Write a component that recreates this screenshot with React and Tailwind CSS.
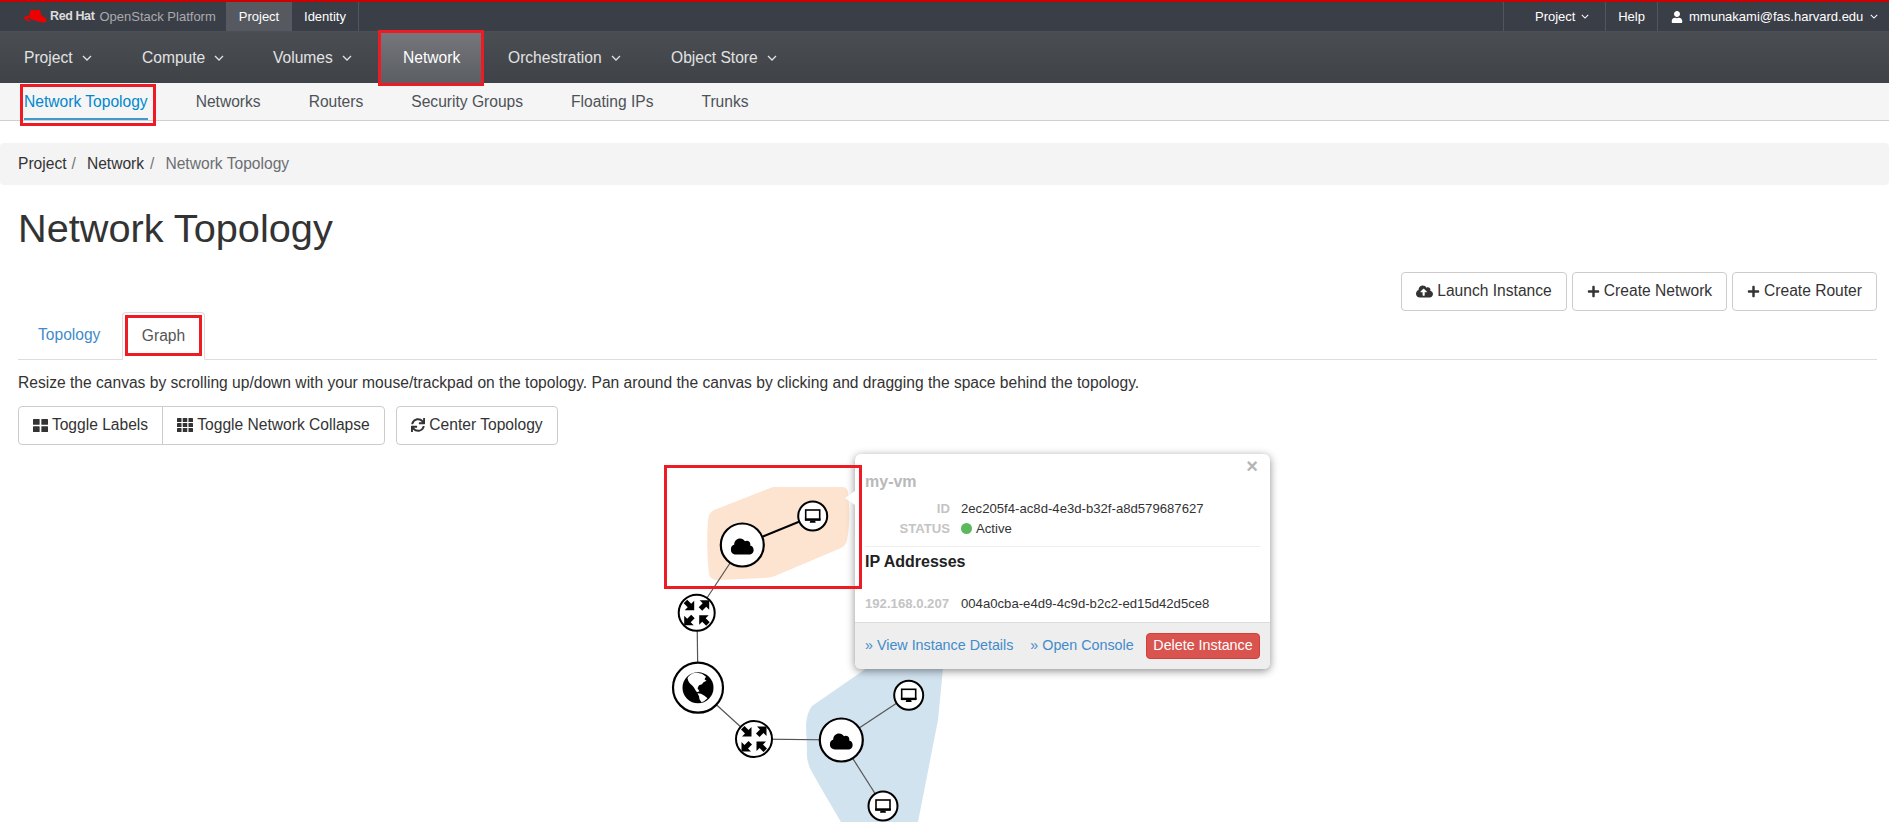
import React from "react";
import { FaCloud, FaPlus, FaCloudUploadAlt, FaSync, FaUser } from "react-icons/fa";

const Chevron = ({ className = "" }) => (
  <svg viewBox="0 0 10 6" className={className} fill="none" stroke="currentColor" strokeWidth="1.3">
    <path d="M1 1l4 4 4-4" />
  </svg>
);

const Grid = ({ n, className = "" }) => {
  const gap = n === 2 ? 1.5 : 1;
  const s = (13 - gap * (n - 1)) / n;
  const cells = [];
  for (let r = 0; r < n; r++) for (let c = 0; c < n; c++) cells.push(<rect key={r + "-" + c} x={c * (s + gap)} y={r * (s + gap)} width={s} height={s} rx="0.5" />);
  return <svg viewBox="0 0 13 13" preserveAspectRatio="none" className={className} fill="currentColor">{cells}</svg>;
};

const RedBox = ({ className }) => <div className={"absolute border-[3px] border-[#ed1c24] pointer-events-none " + className} />;

const Btn = ({ icon, children, className = "" }) => (
  <div className={"h-[39px] pb-[1px] flex items-center justify-center gap-[4px] bg-white border border-[#ccc] text-[15.6px] text-[#333] " + className}>
    {icon}
    <span>{children}</span>
  </div>
);

const Vm = ({ x, y }) => (
  <g transform={`translate(${x} ${y})`}>
    <circle r="14.5" fill="#fff" stroke="#000" strokeWidth="2" />
    <rect x="-7" y="-6" width="14" height="9.5" fill="#fff" stroke="#000" strokeWidth="1.6" />
    <rect x="-7.8" y="2.4" width="15.6" height="2.4" fill="#000" />
    <path d="M-2.4 4.8h4.8l.6 2h-6z" fill="#000" />
  </g>
);

const Cloud = ({ x, y }) => (
  <g>
    <circle cx={x} cy={y} r="21.5" fill="#fff" stroke="#000" strokeWidth="2.2" />
    <FaCloud x={x - 11.5} y={y - 10} size={23} color="#000" />
  </g>
);

const Router = ({ x, y }) => (
  <g transform={`translate(${x} ${y})`}>
    <circle r="18" fill="#fff" stroke="#000" strokeWidth="2" />
    <path d="M-13 -9.500L-9.500 -13 -5.500 -9 -2.500 -12V-2.500H-12L-9 -5.500z" fill="#000" />
    <path d="M13 9.500L9.500 13 5.500 9 2.500 12V2.500H12L9 5.500z" fill="#000" />
    <path d="M2 -5.500L5.500 -2 9.500 -6 12.500 -3V-12.500H3L6 -9.500z" fill="#000" />
    <path d="M-2 5.500L-5.500 2 -9.500 6 -12.500 3V12.500H-3L-6 9.500z" fill="#000" />
  </g>
);

const Globe = ({ x, y }) => (
  <g transform={`translate(${x} ${y})`}>
    <circle r="25" fill="#fff" stroke="#000" strokeWidth="2.2" />
    <circle r="15.5" fill="#000" />
    <path d="M-10.500 -9.500C-9 -13 -5 -15 -1 -15L4 -14 8 -11 6.500 -8.500 8.500 -7 5.500 -5.500 4 -3.500 1 -2.500-.5 .5 1.500 3.500 -1 4.500C-3 2-4 -.5-6 -2.500-8 -4-10 -6-10.500 -9.500z" fill="#fff" />
    <path d="M-.5 5.500L3 6 6.500 8 9.500 10.500 6 13.500 3.500 14.500 1.500 11.500 1 8.500z" fill="#fff" />
  </g>
);

function Graph() {
  return (
    <svg viewBox="0 445 1889 377" className="absolute inset-0 w-[1889px] h-[377px]">
      <path d="M773 487 L842 487 Q847 487 848 492 Q851 520 847 540 Q846 546 841 548 L775 576 Q770 578 764 578 L718 580 Q710 580 709 574 Q706 550 708 520 Q709 512 714 510 Z" fill="#fde4d1" />
      <path d="M867 668 L943 668 Q941 690 938 720 L918 822 L841 822 Q822 790 812 772 Q806 762 807 750 L806 725 Q807 712 812 706 Z" fill="#d2e3f0" />
      <g stroke="#555" strokeWidth="1.2">
        <line x1="742" y1="545" x2="697" y2="613" />
        <line x1="697" y1="613" x2="698" y2="688" />
        <line x1="698" y1="688" x2="754" y2="739" />
        <line x1="754" y1="739" x2="841" y2="740" />
        <line x1="841" y1="740" x2="909" y2="695" />
        <line x1="841" y1="740" x2="883" y2="806" />
      </g>
      <line x1="742" y1="545" x2="813" y2="516" stroke="#000" strokeWidth="2" />
      <Router x={696.7} y={612.7} />
      <Globe x={698} y={687.7} />
      <Router x={754} y={739} />
      <Cloud x={742.3} y={545} />
      <Cloud x={841.3} y={740} />
      <Vm x={812.7} y={516} />
      <Vm x={908.7} y={695.3} />
      <Vm x={883} y={806} />
    </svg>
  );
}

function Popover() {
  return (
    <div className="absolute left-[855px] top-[9px] w-[415px] h-[215px] bg-white rounded-[6px] shadow-[0_2px_8px_rgba(0,0,0,0.45)] flex flex-col text-[13.15px] text-[#333]">
      <div className="absolute left-[-10px] top-[37px] w-0 h-0 border-y-[7.5px] border-y-transparent border-r-[10px] border-r-white" />
      <div className="absolute right-[12px] top-[3px] text-[20px] font-bold leading-[18px] text-[#b5b5b5]">×</div>
      <div className="flex-1 px-[10px] min-h-0">
        <div className="text-[16px] font-bold text-[#b9b9b9] leading-[20px] mt-[18px] h-[20px]">my-vm</div>
        <div className="flex mt-[7px] h-[20px] items-center">
          <div className="w-[85px] text-right font-bold text-[#c4c4c4]">ID</div>
          <div className="ml-[11px]">2ec205f4-ac8d-4e3d-b32f-a8d579687627</div>
        </div>
        <div className="flex h-[19px] items-center">
          <div className="w-[85px] text-right font-bold text-[#c4c4c4]">STATUS</div>
          <div className="ml-[11px] flex items-center gap-[4px]">
            <span className="w-[11px] h-[11px] rounded-full bg-[#5cb85c]" />
            <span>Active</span>
          </div>
        </div>
        <div className="border-t border-[#eee] mt-[8px]" />
        <div className="text-[16px] font-bold text-[#222] leading-[20px] mt-[5px]">IP Addresses</div>
        <div className="flex mt-[22px] h-[20px] items-center">
          <div className="w-[85px] font-bold text-[#c4c4c4] whitespace-nowrap">192.168.0.207</div>
          <div className="ml-[11px]">004a0cba-e4d9-4c9d-b2c2-ed15d42d5ce8</div>
        </div>
      </div>
      <div className="h-[47px] bg-[#eeeeee] border-t border-[#ddd] rounded-b-[6px] flex items-center px-[10px] text-[14.3px] text-[#428bca]">
        <span>» View Instance Details</span>
        <span className="ml-[17px]">» Open Console</span>
        <span className="ml-auto h-[26px] w-[114px] flex items-center justify-center bg-[#d9534f] border border-[#d43f3a] rounded-[4px] text-white">Delete Instance</span>
      </div>
    </div>
  );
}

export default function App() {
  const main = [
    ["Project", true, "w-[118px]"],
    ["Compute", true, "w-[131px]"],
    ["Volumes", true, "w-[130px]"],
    ["Network", false, "w-[105px]"],
    ["Orchestration", true, "w-[163px]"],
    ["Object Store", true, "w-[150px]"],
  ];
  const sub = ["Network Topology", "Networks", "Routers", "Security Groups", "Floating IPs", "Trunks"];
  return (
    <div className="relative w-[1889px] h-[822px] overflow-hidden bg-white flex flex-col font-['Liberation_Sans',Arial,sans-serif] text-[#333]">
      {/* top bar */}
      <div className="h-[32px] shrink-0 border-t-2 border-[#cc0000] border-b border-b-[#4c5056] bg-[#3a3e47] flex items-stretch text-[13px] text-white">
        <div className="w-[226px] flex items-center pl-[24px] gap-[3px]">
          <svg viewBox="0 0 24 16" className="w-[23px] h-[16px] mb-[1px]">
            <path d="M6.500 3C8 .5 10.500 1.500 12.500 2 14.500 1.500 16 .5 17 3L18.500 8C21 9 24 10.500 23.500 13 23 15.500 19 15 16 14 12 13 8 11 4.500 10 3.500 9.700 3 10.500 3.800 11 5.500 12.200 7 12.800 9 13.500 5 14 1 12.500.3 10 0 8.500 2 7.500 5 8.500z" fill="#ee0000" />
          </svg>
          <span className="font-bold text-[12.5px] text-[#dcdcdc] tracking-[-0.4px]">Red Hat</span>
          <span className="ml-[2px] text-[13px] text-[#a9abae]">OpenStack Platform</span>
        </div>
        <div className="w-[66px] flex items-center justify-center bg-[#565a60]">Project</div>
        <div className="w-[67px] flex items-center justify-center border-r border-[#52565c]">Identity</div>
        <div className="flex-1" />
        <div className="w-[102px] border-l border-[#52565c] flex items-center pl-[31px] gap-[6px]">
          <span>Project</span>
          <Chevron className="w-[8px] h-[5px]" />
        </div>
        <div className="w-[52px] border-l border-[#52565c] flex items-center justify-center">Help</div>
        <div className="flex-1 max-w-[232px] border-l border-[#52565c] flex items-center pl-[13px] gap-[6px]">
          <FaUser size={12} />
          <span>mmunakami@fas.harvard.edu</span>
          <Chevron className="w-[8px] h-[5px] ml-[1px]" />
        </div>
      </div>
      {/* main nav */}
      <div className="h-[51px] shrink-0 bg-gradient-to-b from-[#4a4e53] to-[#3f4347] flex text-[15.6px]">
        {main.map(([label, chev, w]) => (
          <div
            key={label}
            className={
              "flex items-center pl-[24px] gap-[9px] " + w + " " +
              (label === "Network" ? "bg-gradient-to-b from-[#75777c] to-[#5b5e63] text-white" : "text-[#e2e2e2]")
            }
          >
            <span>{label}</span>
            {chev && <Chevron className="w-[10px] h-[6px]" />}
          </div>
        ))}
      </div>
      {/* sub nav */}
      <div className="h-[38px] shrink-0 bg-[#f5f5f5] border-b border-[#cfcfcf] flex text-[15.6px] text-[#4d5258]">
        {sub.map((s, i) => (
          <div key={s} className="relative flex items-center px-[24px]">
            <span className={i === 0 ? "text-[#0088ce]" : ""}>{s}</span>
            {i === 0 && <div className="absolute left-[24px] right-[24px] bottom-0 h-[2px] bg-[#4499cc]" />}
          </div>
        ))}
      </div>
      {/* breadcrumb */}
      <div className="mt-[22px] h-[42px] shrink-0 bg-[#f4f4f4] rounded-[4px] flex items-center pl-[18px] text-[15.6px]">
        <span>Project</span>
        <span className="text-[#777] ml-[5px]">/</span>
        <span className="ml-[11px]">Network</span>
        <span className="text-[#777] ml-[6px]">/</span>
        <span className="ml-[11px] text-[#6a6e72]">Network Topology</span>
      </div>
      {/* heading */}
      <h1 className="mt-[20px] ml-[18px] h-[46px] leading-[46px] text-[39.7px] font-normal text-[#333] shrink-0">Network Topology</h1>
      {/* actions */}
      <div className="mt-[21px] flex justify-end gap-[5px] pr-[12px] shrink-0">
        <Btn className="w-[166px] rounded-[4px]" icon={<FaCloudUploadAlt size={17} />}>Launch Instance</Btn>
        <Btn className="w-[155px] rounded-[4px]" icon={<FaPlus size={13} />}>Create Network</Btn>
        <Btn className="w-[145px] rounded-[4px]" icon={<FaPlus size={13} />}>Create Router</Btn>
      </div>
      {/* tabs */}
      <div className="ml-[18px] mr-[12px] h-[49px] shrink-0 border-b border-[#ddd] flex text-[15.6px]">
        <div className="w-[104px] flex items-center pl-[20px] text-[#428bca]">Topology</div>
        <div className="w-[83px] mt-[1px] pb-[1px] -mb-px bg-white border border-[#ddd] border-b-white rounded-t-[4px] flex items-center justify-center text-[#555]">Graph</div>
      </div>
      {/* help */}
      <p className="mt-[13px] ml-[18px] h-[20px] leading-[20px] text-[15.6px] text-[#333] shrink-0">
        Resize the canvas by scrolling up/down with your mouse/trackpad on the topology. Pan around the canvas by clicking and dragging the space behind the topology.
      </p>
      {/* toolbar */}
      <div className="mt-[13px] ml-[18px] flex shrink-0">
        <div className="flex">
          <Btn className="w-[145px] rounded-l-[4px]" icon={<Grid n={2} className="w-[15px] h-[13px]" />}>Toggle Labels</Btn>
          <Btn className="w-[223px] -ml-px rounded-r-[4px]" icon={<Grid n={3} className="w-[16px] h-[14px]" />}>Toggle Network Collapse</Btn>
        </div>
        <Btn className="w-[162px] ml-[11px] rounded-[4px]" icon={<FaSync size={14} />}>Center Topology</Btn>
      </div>
      {/* canvas */}
      <div className="relative flex-1 min-h-0">
        <Graph />
        <Popover />
        <RedBox className="left-[664px] top-[20px] w-[198px] h-[124px]" />
      </div>
      <RedBox className="left-[378px] top-[30px] w-[106px] h-[56px]" />
      <RedBox className="left-[20px] top-[84px] w-[136px] h-[42px]" />
      <RedBox className="left-[125px] top-[315px] w-[77px] h-[41px]" />
    </div>
  );
}
